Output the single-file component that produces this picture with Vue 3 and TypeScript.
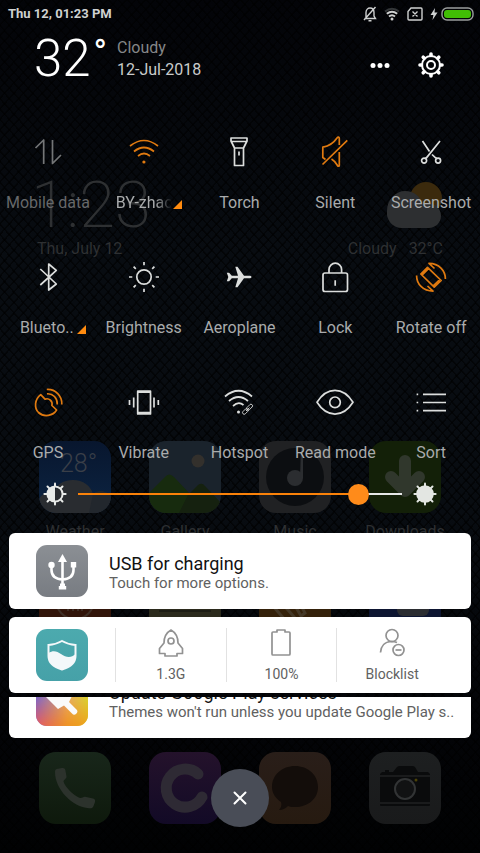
<script setup lang="ts">
import { computed, ref } from 'vue'

interface Toggle {
  name: string
  label: string
  tone?: 'active' | 'disabled'
  expandable?: 'fade' | 'plain'
  stroke?: string
  fill?: string
  thin?: string
}

const toggles: Toggle[] = [
  { name: 'data', label: 'Mobile data', tone: 'disabled', stroke: 'M5.5 14L13.7 6V30M22.5 6V29.5L31 21' },
  {
    name: 'wifi', label: 'BY-zhao', tone: 'active', expandable: 'fade',
    stroke: 'M4 12Q18 1 32 12M8 17.5Q18 9.5 28 17.5M12 22Q18 17 24 22',
    fill: 'M16.3 28a1.6 1.6 0 1 0 3.2 0a1.6 1.6 0 1 0-3.2 0z',
  },
  { name: 'torch', label: 'Torch', stroke: 'M10 4H26V7L22.5 14V31.5H13.5V14L10 7ZM10 7.5H26M13.5 14H22.5M18 17.5V21.5' },
  {
    name: 'silent', label: 'Silent', tone: 'active',
    stroke: 'M8.5 25.5L5.8 23.5V13.2C12 12 17 8.5 20 4C21 2.7 22.3 3 22.3 4.5V11M22.3 18V31.5C22.3 32.5 21 32.5 20.5 31.5C19 28.5 17 26.5 14.5 25M5.5 30.5L30.3 6.3',
  },
  {
    name: 'screenshot', label: 'Screenshot',
    stroke: 'M9.5 7L16.5 17.5M19 20.5L23.4 24.6M27 7L12.8 24.6M8.6 26.6a2.5 2.5 0 1 0 5 0a2.5 2.5 0 1 0-5 0M22.6 26.6a2.5 2.5 0 1 0 5 0a2.5 2.5 0 1 0-5 0',
  },
  { name: 'bluetooth', label: 'Blueto..', expandable: 'plain', stroke: 'M10.3 10L26.3 25L18.7 31V5L26.3 11.3L10.3 26' },
  {
    name: 'brightness', label: 'Brightness',
    stroke: 'M10.8 18a7.2 7.2 0 1 0 14.4 0a7.2 7.2 0 1 0-14.4 0M18 3V6.3M18 29.7V33M3 18H6.3M29.7 18H33M7.6 7.6L9.8 9.8M26.2 26.2L28.4 28.4M7.6 28.4L9.8 26.2M26.2 9.8L28.4 7.6',
  },
  {
    name: 'aeroplane', label: 'Aeroplane',
    fill: 'M30.5 18c0 .8-1 1.3-2.5 1.3h-5l-6.5 9h-2.2l2.7-9h-6.2l-2.7 3H5.8l1.5-4.3-1.5-4.3h2.3l2.7 3H17l-2.7-9h2.2l6.5 9h5c1.5 0 2.5.5 2.5 1.3z',
  },
  {
    name: 'lock', label: 'Lock',
    stroke: 'M8 14H28.5a2 2 0 0 1 2 2V30.5a2 2 0 0 1-2 2H8a2 2 0 0 1-2-2V16a2 2 0 0 1 2-2zM12 14V10.5a6.3 6.3 0 0 1 12.6 0V14M18.2 21.3V26.7',
  },
  {
    name: 'rotate', label: 'Rotate off', tone: 'active',
    stroke: 'M7.8 15L14.5 8.3L28.2 21.5L21.2 28.2ZM9 16.2L15.7 9.5M20 27L27 20.3M3.6 16.5C3.5 25 10 32 20 32.2L14.5 27M32.4 20C32.5 11.5 26 4.5 16 4.3L21.5 9.5',
  },
  {
    name: 'gps', label: 'GPS', tone: 'active',
    stroke: 'M10.7 10.7C4.5 15.5 4 24 8.5 28.5C14 33.5 23 32 26.6 26L21.9 21.5C23 17.500 19 13.500 15 15.200ZM17 9.800C23 9.300 27.500 14 27.300 20.500M16.800 5.500C25.500 5 32.300 12 31.800 20.500',
  },
  {
    name: 'vibrate', label: 'Vibrate',
    stroke: 'M11.7 7H24.5V30H11.7ZM11.7 8.2H24.5M11.7 28.5H24.5M7.7 13.5V23.5M3.5 16V21M28 13.5V23.5M32.3 16V21',
  },
  {
    name: 'hotspot', label: 'Hotspot',
    stroke: 'M4 12.5Q17.5 1 31 12.5M8 17Q17.5 9 27 17M12 22Q17.5 17 22.5 21',
    fill: 'M16 28a1.5 1.5 0 1 0 3 0a1.5 1.5 0 1 0-3 0z',
    thin: 'M22 27.5L24.5 25A1.6 1.6 0 0 1 26.8 27.3L24.3 29.8A1.6 1.6 0 0 1 22 27.5M26 23.5L28.8 20.7A1.6 1.6 0 0 1 31.1 23L28.3 25.8A1.6 1.6 0 0 1 26 23.5M25 27L28.5 23.5',
  },
  {
    name: 'read', label: 'Read mode',
    stroke: 'M0 18.3C10 2.5 26 2.5 36 18.3C26 34 10 34 0 18.3ZM12.7 18.3a5.3 5.3 0 1 0 10.6 0a5.3 5.3 0 1 0-10.6 0',
  },
  { name: 'sort', label: 'Sort', stroke: 'M10 10.3H33M10 18.5H33M10 26.7H33M3.6 10.3H5.2M3.6 18.5H5.2M3.6 26.7H5.2' },
]

const brightness = ref(89)
const trackFill = computed(() => ({ '--fill': `${brightness.value}%` }))
const spokes = [0, 45, 90, 135, 180, 225, 270, 315]
</script>

<template>
  <div class="screen">
    <div class="home" aria-hidden="true">
      <div class="clock-widget">
        <div>
          <div class="clock">1:23</div>
          <div class="home-text">Thu, July 12</div>
        </div>
        <div class="forecast">
          <svg width="56" height="48" viewBox="0 0 56 48">
            <circle cx="39" cy="17" r="16" fill="#3b2a0d" />
            <path d="M15 47A15 15 0 0 1 0 30C0 18 9 10 18 10C27 10 33 15 35 23C46 20 54 26 54 35C54 42 48 47 42 47Z" fill="#2d2f31" />
          </svg>
          <div class="home-text"><span>Cloudy</span><span>32°C</span></div>
        </div>
      </div>

      <div class="apps">
        <div class="app">
          <svg class="app-icon" viewBox="0 0 72 72">
            <defs>
              <clipPath id="tile"><rect width="72" height="72" rx="17" /></clipPath>
              <linearGradient id="sky" x2="0" y2="1"><stop stop-color="#08162e" /><stop offset="1" stop-color="#0c2442" /></linearGradient>
            </defs>
            <g clip-path="url(#tile)">
              <rect width="72" height="72" fill="url(#sky)" />
              <text x="21" y="31" class="degrees">28°</text>
              <path d="M0 72V58C3 52 9 51 14 54C16 44 24 39 34 39C44 39 52 45 54 53C60 48 69 50 72 56V72Z" fill="#292c30" />
              <path d="M54 53C60 48 69 50 72 56V72H50Z" fill="#22272d" />
            </g>
          </svg>
          <span class="app-name">Weather</span>
        </div>
        <div class="app">
          <svg class="app-icon" viewBox="0 0 72 72">
            <g clip-path="url(#tile)">
              <rect width="72" height="72" fill="#1a232c" />
              <circle cx="49" cy="20" r="6.5" fill="#33302c" />
              <path d="M0 72V52L16 36Q20 31 25 36L42 54V72Z" fill="#172b0e" />
              <path d="M30 72L39 54L49 44Q53 41 56 45L72 62V72Z" fill="#15210f" />
            </g>
          </svg>
          <span class="app-name">Gallery</span>
        </div>
        <div class="app">
          <svg class="app-icon" viewBox="0 0 72 72">
            <rect width="72" height="72" rx="17" fill="#202123" />
            <circle cx="36" cy="36" r="29" fill="#0c0e11" />
            <circle cx="36" cy="37" r="8" fill="#2b2d30" />
            <path d="M42 8H44V37H41Z" fill="#2b2d30" />
          </svg>
          <span class="app-name">Music</span>
        </div>
        <div class="app">
          <svg class="app-icon" viewBox="0 0 72 72">
            <rect width="72" height="72" rx="17" fill="#132008" />
            <path d="M36 20V50M22 36L36 50L50 36" fill="none" stroke="#30372c" stroke-width="12" stroke-linecap="round" stroke-linejoin="round" />
          </svg>
          <span class="app-name">Downloads</span>
        </div>
        <div class="app">
          <svg class="app-icon" viewBox="0 0 72 72">
            <rect width="72" height="72" rx="17" fill="#32150a" />
            <circle cx="36" cy="34" r="19" fill="none" stroke="#403027" stroke-width="2" />
            <path d="M29 40V45M34 38V45M39 40V45M43 38V45" stroke="#403027" stroke-width="2" />
          </svg>
        </div>
        <div class="app">
          <svg class="app-icon" viewBox="0 0 72 72">
            <rect width="72" height="72" rx="17" fill="#2b2a1c" />
            <path d="M10 45H62M10 36H62" stroke="#1d1d14" stroke-width="2" />
          </svg>
        </div>
        <div class="app">
          <svg class="app-icon" viewBox="0 0 72 72">
            <rect width="72" height="72" rx="17" fill="#34210a" />
            <path d="M14 40L26 54M22 36L36 52M34 36L42 50L46 47L40 36" fill="none" stroke="#443827" stroke-width="3" />
          </svg>
        </div>
        <div class="app">
          <svg class="app-icon" viewBox="0 0 72 72">
            <rect width="72" height="72" rx="17" fill="#0d1531" />
            <rect x="28" y="16" width="32" height="34" rx="6" fill="#2b2d31" />
          </svg>
        </div>
      </div>

      <div class="dock">
        <svg class="app-icon" viewBox="0 0 72 72">
          <defs><linearGradient id="call" x2="0" y2="1"><stop stop-color="#18261a" /><stop offset="1" stop-color="#0e190c" /></linearGradient></defs>
          <rect width="72" height="72" rx="17" fill="url(#call)" />
          <path d="M16 20C16 17.5 17 17 19 16.7L23 16C25 15.7 26 16.5 26.3 18L27.5 24.5C27.8 26.5 24.5 28 24.5 29.5C26 35 34 43 41 46C43 46.5 44.5 44.5 46 44.8L54 46.5C56 47 56.3 48 56 50L54.5 54C54 56 52.5 56.5 50 56.3C33 55 16 37 16 20Z" fill="#2c322c" />
        </svg>
        <svg class="app-icon" viewBox="0 0 72 72">
          <defs><linearGradient id="violet" x2="0" y2="1"><stop stop-color="#24122b" /><stop offset="1" stop-color="#120a26" /></linearGradient></defs>
          <rect width="72" height="72" rx="17" fill="url(#violet)" />
          <path d="M49 22A19 19 0 1 0 53 45" fill="none" stroke="#2e2a34" stroke-width="11" stroke-linecap="round" />
        </svg>
        <svg class="app-icon" viewBox="0 0 72 72">
          <defs><linearGradient id="chat" x2="0" y2="1"><stop stop-color="#291e19" /><stop offset="1" stop-color="#261a10" /></linearGradient></defs>
          <rect width="72" height="72" rx="17" fill="url(#chat)" />
          <path d="M36 14C49 14 59 23 59 35C59 47 49 55 36 55C33 55 31 55 29 54C27 56 24 58 20 58C22 56 23 53 22 50C16 46 13 41 13 35C13 23 23 14 36 14Z" fill="#130d0a" />
        </svg>
        <svg class="app-icon" viewBox="0 0 72 72">
          <defs><linearGradient id="shell" x2="0" y2="1"><stop stop-color="#1d1f20" /><stop offset="1" stop-color="#191a1b" /></linearGradient></defs>
          <rect width="72" height="72" rx="17" fill="url(#shell)" />
          <path d="M11 22L13 20H24L28 15Q29 14 31 14H43Q45 14 46 15L49 20H59L61 22V53Q61 54 60 54H12Q11 54 11 53ZM16 18H20V20H16Z" fill="#0a0b0c" />
          <path d="M11 24H61M11 51H61" stroke="#2a2c2d" />
          <circle cx="36" cy="37" r="10" fill="#111213" stroke="#323435" stroke-width="2" />
          <circle cx="47" cy="28" r="1.5" fill="#4b4207" />
        </svg>
      </div>
    </div>

    <main class="shade">
      <div class="status">
        <span class="status-time">Thu 12, 01:23 PM</span>
        <div class="status-icons">
          <svg class="bell" width="14" height="16" viewBox="0 0 14 16" role="img" aria-label="Silent mode">
            <path d="M3 12.5V6.5C3 3.5 5 2 7 2S11 3.5 11 6.5V10L12.5 12.5H1.5M5.5 14.8H8.5M1 14L12.5 1" />
          </svg>
          <svg class="signal" width="16" height="14" viewBox="0 0 16 14" role="img" aria-label="Wi-Fi">
            <path class="faint" d="M1 4.5Q8-1 15 4.5" />
            <path d="M2.8 6.8Q8 2.6 13.2 6.8M5 9.5Q8 7 11 9.5" />
            <circle cx="8" cy="12" r="1.5" />
          </svg>
          <svg class="sim" width="16" height="14" viewBox="0 0 16 14" role="img" aria-label="No SIM">
            <path d="M4 1H14A1 1 0 0 1 15 2V12A1 1 0 0 1 14 13H2A1 1 0 0 1 1 12V4.5ZM5.5 4.5L10.5 9.5M10.5 4.5L5.5 9.5" />
          </svg>
          <svg class="bolt" width="8" height="14" viewBox="0 0 8 14" role="img" aria-label="Charging">
            <path d="M5 1L0.5 8H3.4L2.5 13L7.5 5.5H4.5Z" />
          </svg>
          <svg class="battery" width="33" height="14" viewBox="0 0 33 14" role="img" aria-label="Battery full">
            <rect class="battery-case" x="1" y="1" width="31" height="12" rx="5" />
            <rect class="battery-level" x="3" y="3" width="27" height="8" rx="3" />
          </svg>
        </div>
      </div>

      <header class="header">
        <div class="temperature">32<span class="degree-sign">°</span></div>
        <div class="conditions">
          <div class="sky">Cloudy</div>
          <div class="date">12-Jul-2018</div>
        </div>
        <button class="icon-button" type="button" aria-label="More">
          <svg width="28" height="28" viewBox="0 0 28 28" fill="#fff">
            <circle cx="7" cy="14.5" r="2.5" /><circle cx="14" cy="14.5" r="2.5" /><circle cx="21" cy="14.5" r="2.5" />
          </svg>
        </button>
        <button class="icon-button" type="button" aria-label="Settings">
          <svg width="28" height="28" viewBox="0 0 28 28" fill="none" stroke="#fff">
            <circle cx="14" cy="14" r="9" stroke-width="2" />
            <circle cx="14" cy="14" r="4" stroke-width="2" />
            <path v-for="a in spokes" :key="a" d="M14 4.5V3" :transform="`rotate(${a} 14 14)`" stroke-width="3.6" stroke-linecap="round" />
          </svg>
        </button>
      </header>

      <section class="toggles" aria-label="Quick toggles">
        <button v-for="t in toggles" :key="t.name" type="button" class="toggle" :class="t.tone">
          <svg class="toggle-icon" viewBox="0 0 36 36">
            <path v-if="t.stroke" class="line" :d="t.stroke" />
            <path v-if="t.fill" class="solid" :d="t.fill" />
            <path v-if="t.thin" class="thin" :d="t.thin" />
          </svg>
          <span class="toggle-label" :class="{ expandable: t.expandable }">
            <span :class="{ fade: t.expandable === 'fade' }">{{ t.label }}</span>
            <svg v-if="t.expandable" class="corner" viewBox="0 0 9 9"><path d="M9 0V9H0Z" /></svg>
          </span>
        </button>
      </section>

      <div class="dimmer">
        <svg width="24" height="24" viewBox="0 0 24 24">
          <circle cx="12" cy="12" r="7.6" fill="none" stroke="#e8eae8" stroke-width="2" />
          <path d="M12 4.5A7.5 7.5 0 0 0 12 19.5Z" fill="#e8eae8" />
          <path v-for="a in spokes" :key="a" d="M12 4V1.4" :transform="`rotate(${a} 12 12)`" stroke="#e8eae8" stroke-width="2" stroke-linecap="round" />
        </svg>
        <input v-model.number="brightness" type="range" min="0" max="100" aria-label="Brightness level" :style="trackFill" />
        <svg width="24" height="24" viewBox="0 0 24 24">
          <circle cx="12" cy="12" r="8.8" fill="#e3e6e2" />
          <path v-for="a in spokes" :key="a" d="M12 4V1.4" :transform="`rotate(${a} 12 12)`" stroke="#e3e6e2" stroke-width="2" stroke-linecap="round" />
        </svg>
      </div>

      <section class="notifications" aria-label="Notifications">
        <article class="card">
          <svg class="card-icon" viewBox="0 0 52 52">
            <defs><linearGradient id="steel" x2="0" y2="1"><stop stop-color="#8b8f94" /><stop offset="1" stop-color="#787c82" /></linearGradient></defs>
            <rect width="52" height="52" rx="11" fill="url(#steel)" />
            <path d="M26.5 16V42M15.5 20V25C15.5 31 20 34 26.5 34.5C33 34 37.5 31 37.5 25V20" fill="none" stroke="#fff" stroke-width="2.6" />
            <path d="M26.5 9L31 17H22ZM34.8 17H40.2V22.5H34.8ZM22.8 41H30.2V44.5H22.8ZM24 38.5H29V42H24Z" fill="#fff" />
            <circle cx="15.5" cy="20" r="3.2" fill="#fff" />
          </svg>
          <div class="card-text">
            <h2>USB for charging</h2>
            <p>Touch for more options.</p>
          </div>
        </article>

        <article class="card">
          <svg class="card-icon" viewBox="0 0 52 52">
            <defs><linearGradient id="teal" x2="0" y2="1"><stop stop-color="#4caaae" /><stop offset="1" stop-color="#46a1a8" /></linearGradient></defs>
            <rect width="52" height="52" rx="11" fill="url(#teal)" />
            <path d="M26 12Q32 15.5 39.5 16V27C39.5 34 33 38.5 26 40.5C19 38.5 12.5 34 12.5 27V16Q20 15.5 26 12Z" fill="none" stroke="#f4f8fa" stroke-width="2" />
            <path d="M12.5 24C17 21 21 22 25 25C30 28.5 35 29.5 39.5 25V27C39.5 34 33 38.5 26 40.5C19 38.5 12.5 34 12.5 27Z" fill="#f4f8fa" />
          </svg>
          <div class="shortcuts">
            <button type="button" class="shortcut">
              <svg width="30" height="30" viewBox="0 0 30 30">
                <path d="M15 2C18.5 4 22 8.5 22 15L26.5 20.5V25.5H21V28H9V25.5H3.5V20.5L8 15C8 8.5 11.5 4 15 2Z" />
                <circle cx="15" cy="13" r="3" />
              </svg>
              1.3G
            </button>
            <button type="button" class="shortcut">
              <svg width="30" height="30" viewBox="0 0 30 30">
                <path d="M7 4H11V2H19V4H23A1 1 0 0 1 24 5V26A1 1 0 0 1 23 27H7A1 1 0 0 1 6 26V5A1 1 0 0 1 7 4Z" />
              </svg>
              100%
            </button>
            <button type="button" class="shortcut">
              <svg width="30" height="30" viewBox="0 0 30 30">
                <circle cx="15" cy="7.5" r="6" />
                <path d="M3.5 24.5C4 18 8 13.8 14 13.5C17 13.5 19 14 20 14.5" />
                <circle cx="21.5" cy="22" r="5.5" />
                <path d="M18.5 22H24.5" />
              </svg>
              Blocklist
            </button>
          </div>
        </article>

        <div class="tucked">
          <article class="card">
            <svg class="card-icon" viewBox="0 0 52 52">
              <defs>
                <linearGradient id="cool" x2="1" y2="0"><stop stop-color="#7568cf" /><stop offset=".6" stop-color="#e9a96a" /><stop offset="1" stop-color="#d8d62e" /></linearGradient>
                <linearGradient id="warm" x2="1" y2="0"><stop stop-color="#dd5a6c" /><stop offset=".6" stop-color="#ee9427" /><stop offset="1" stop-color="#eba71e" /></linearGradient>
                <linearGradient id="blend" x2="0" y2="1"><stop offset=".4" stop-color="#000" /><stop offset=".95" stop-color="#fff" /></linearGradient>
                <mask id="melt"><rect width="52" height="52" fill="url(#blend)" /></mask>
              </defs>
              <rect width="52" height="52" rx="11" fill="url(#cool)" />
              <rect width="52" height="52" rx="11" fill="url(#warm)" mask="url(#melt)" />
              <path d="M10 23L22 35L28 31.5L36 39.5A3 3 0 0 0 40.5 35.5L33 28L36 22L24 10Z" fill="#fafafa" />
            </svg>
            <div class="card-text">
              <h2>Update Google Play services</h2>
              <p>Themes won't run unless you update Google Play s..</p>
            </div>
          </article>
        </div>
      </section>

      <button class="close" type="button" aria-label="Close">
        <svg width="16" height="16" viewBox="0 0 16 16"><path d="M2.5 2.5L13.5 13.5M13.5 2.5L2.5 13.5" /></svg>
      </button>
    </main>
  </div>
</template>

<style>
body {
  margin: 0;
  background: #020305;
}
</style>

<style scoped>
.screen {
  position: relative;
  min-height: 100vh;
  overflow: hidden;
  font-family: Roboto, "Liberation Sans", sans-serif;
  font-size: 16px;
  line-height: 20px;
  color: #a9abac;
  background:
    repeating-linear-gradient(48deg, rgba(0, 0, 0, 0.6) 0 1px, transparent 2px 7px),
    repeating-linear-gradient(-48deg, rgba(0, 0, 0, 0.6) 0 1px, transparent 2px 7px),
    linear-gradient(#030408, #080c11 30%, #080c11 60%, #030407 85%, #010203);
}

button {
  margin: 0;
  padding: 0;
  border: 0;
  background: none;
  color: inherit;
  font: inherit;
  cursor: pointer;
}

svg {
  display: block;
  flex: none;
}

.home {
  position: absolute;
  inset: 0;
  display: flex;
  flex-direction: column;
  box-sizing: border-box;
  padding: 171px 39px 29px;
  color: #2e3032;
}

.clock-widget {
  display: flex;
  justify-content: space-between;
  align-items: flex-end;
  margin: 0 -2px;
}

.clock {
  margin-left: -6px;
  font-size: 65px;
  font-weight: 200;
  line-height: 68px;
}

.forecast {
  display: flex;
  flex-direction: column;
  align-items: flex-end;
  gap: 10px;
}

.forecast .home-text {
  display: flex;
  gap: 12px;
}

.apps {
  display: grid;
  grid-template-columns: repeat(4, 72px);
  justify-content: space-between;
  row-gap: 24px;
  margin-top: 182px;
}

.app {
  display: flex;
  flex-direction: column;
  align-items: center;
  gap: 9px;
}

.app-icon {
  width: 72px;
  height: 72px;
}

.degrees {
  fill: #3a3f48;
  font-size: 25px;
  font-weight: 300;
}

.dock {
  display: flex;
  justify-content: space-between;
  margin-top: auto;
}

.shade {
  position: relative;
  display: flex;
  flex-direction: column;
  box-sizing: border-box;
  min-height: 100vh;
  padding-bottom: 26px;
}

.status {
  display: flex;
  justify-content: space-between;
  align-items: center;
  height: 28px;
  padding: 0 6px 0 8px;
}

.status-time {
  font-size: 13px;
  font-weight: 700;
  color: #cfd1d1;
}

.status-icons {
  display: flex;
  align-items: center;
  gap: 7px;
  fill: none;
  stroke: #cfd1d1;
  stroke-width: 1.4;
}

.signal {
  stroke-width: 2;
}

.signal circle {
  fill: #cfd1d1;
  stroke: none;
}

.signal .faint {
  stroke: #333638;
}

.bolt {
  margin-right: -4px;
  fill: #cfd1d1;
  stroke: none;
}

.battery-case {
  stroke: #9b9d9d;
}

.battery-level {
  fill: #41bd05;
  stroke: none;
}

.header {
  display: flex;
  align-items: center;
  height: 62px;
  padding: 0 35px 0 34px;
}

.temperature {
  display: flex;
  align-items: flex-start;
  gap: 3px;
  width: 83px;
  font-size: 51px;
  font-weight: 300;
  line-height: 62px;
  color: #fff;
}

.degree-sign {
  font-size: 36px;
  font-weight: 400;
  line-height: 50px;
}

.conditions {
  flex: 1;
  line-height: 22px;
}

.sky {
  color: #858788;
}

.date {
  color: #c9cbcb;
}

.icon-button {
  display: grid;
  place-items: center;
  padding-top: 11px;
}

.icon-button + .icon-button {
  margin-left: 23px;
}

.toggles {
  display: grid;
  grid-template-columns: repeat(5, 1fr);
  row-gap: 46px;
  padding: 44px 1px 0 0;
}

.toggle {
  display: flex;
  flex-direction: column;
  align-items: center;
  gap: 23px;
  white-space: nowrap;
  --ink: #dcdedd;
}

.toggle.active {
  --ink: #e07a10;
}

.toggle.disabled {
  --ink: #747677;
  color: #66686a;
}

.toggle-icon {
  width: 36px;
  height: 36px;
  overflow: visible;
}

.line,
.thin {
  fill: none;
  stroke: var(--ink);
  stroke-width: 1.7;
  stroke-linejoin: round;
}

.thin {
  stroke-width: 0.9;
}

.solid {
  fill: var(--ink);
}

.expandable {
  position: relative;
  width: 56px;
  text-align: left;
}

.fade {
  display: block;
  overflow: hidden;
  mask-image: linear-gradient(90deg, #000 70%, transparent);
}

.corner {
  position: absolute;
  left: 100%;
  bottom: 4px;
  width: 9px;
  height: 9px;
  margin-left: 1px;
  fill: #ff8b0f;
}

.dimmer {
  display: flex;
  align-items: center;
  gap: 11px;
  height: 24px;
  padding: 0 43px;
  margin-top: 19px;
}

.dimmer input {
  flex: 1;
  min-width: 0;
  height: 24px;
  margin: 0;
  appearance: none;
  background: linear-gradient(90deg, #fb8209 var(--fill), #e6e7e7 var(--fill)) center / 100% 2px no-repeat;
}

.dimmer input::-webkit-slider-thumb {
  appearance: none;
  width: 21px;
  height: 21px;
  border: 0;
  border-radius: 50%;
  background: #ff8b1a;
}

.notifications {
  display: flex;
  flex-direction: column;
  gap: 8px;
  margin: 27px 9px 0;
}

.card {
  display: flex;
  align-items: center;
  flex: none;
  box-sizing: border-box;
  height: 76px;
  padding: 0 24px 0 27px;
  border-radius: 6px;
  background: #fff;
}

.card-icon {
  width: 52px;
  height: 52px;
}

.card-text {
  min-width: 0;
  margin-left: 21px;
  padding-top: 4px;
  white-space: nowrap;
}

.card-text h2 {
  margin: 0;
  font-size: 18px;
  font-weight: 400;
  line-height: 20px;
  color: #121212;
}

.card-text p {
  margin: 0;
  font-size: 15px;
  line-height: 18px;
  color: #616161;
}

.tucked {
  display: flex;
  flex-direction: column;
  justify-content: flex-end;
  height: 41px;
  margin-top: -4px;
  overflow: hidden;
}

.shortcuts {
  display: grid;
  flex: 1;
  grid-template-columns: repeat(3, 1fr);
  margin-left: 27px;
}

.shortcut {
  display: flex;
  flex-direction: column;
  align-items: center;
  gap: 6px;
  height: 54px;
  border-left: 1px solid #e2e2e2;
  font-size: 14px;
  color: #616161;
}

.shortcut svg {
  fill: none;
  stroke: #929292;
  stroke-width: 1.7;
  stroke-linejoin: round;
}

.close {
  display: grid;
  place-items: center;
  align-self: center;
  width: 58px;
  height: 58px;
  margin-top: auto;
  border-radius: 50%;
  background: #494d57;
}

.close path {
  stroke: #fff;
  stroke-width: 2;
  stroke-linecap: round;
}
</style>
